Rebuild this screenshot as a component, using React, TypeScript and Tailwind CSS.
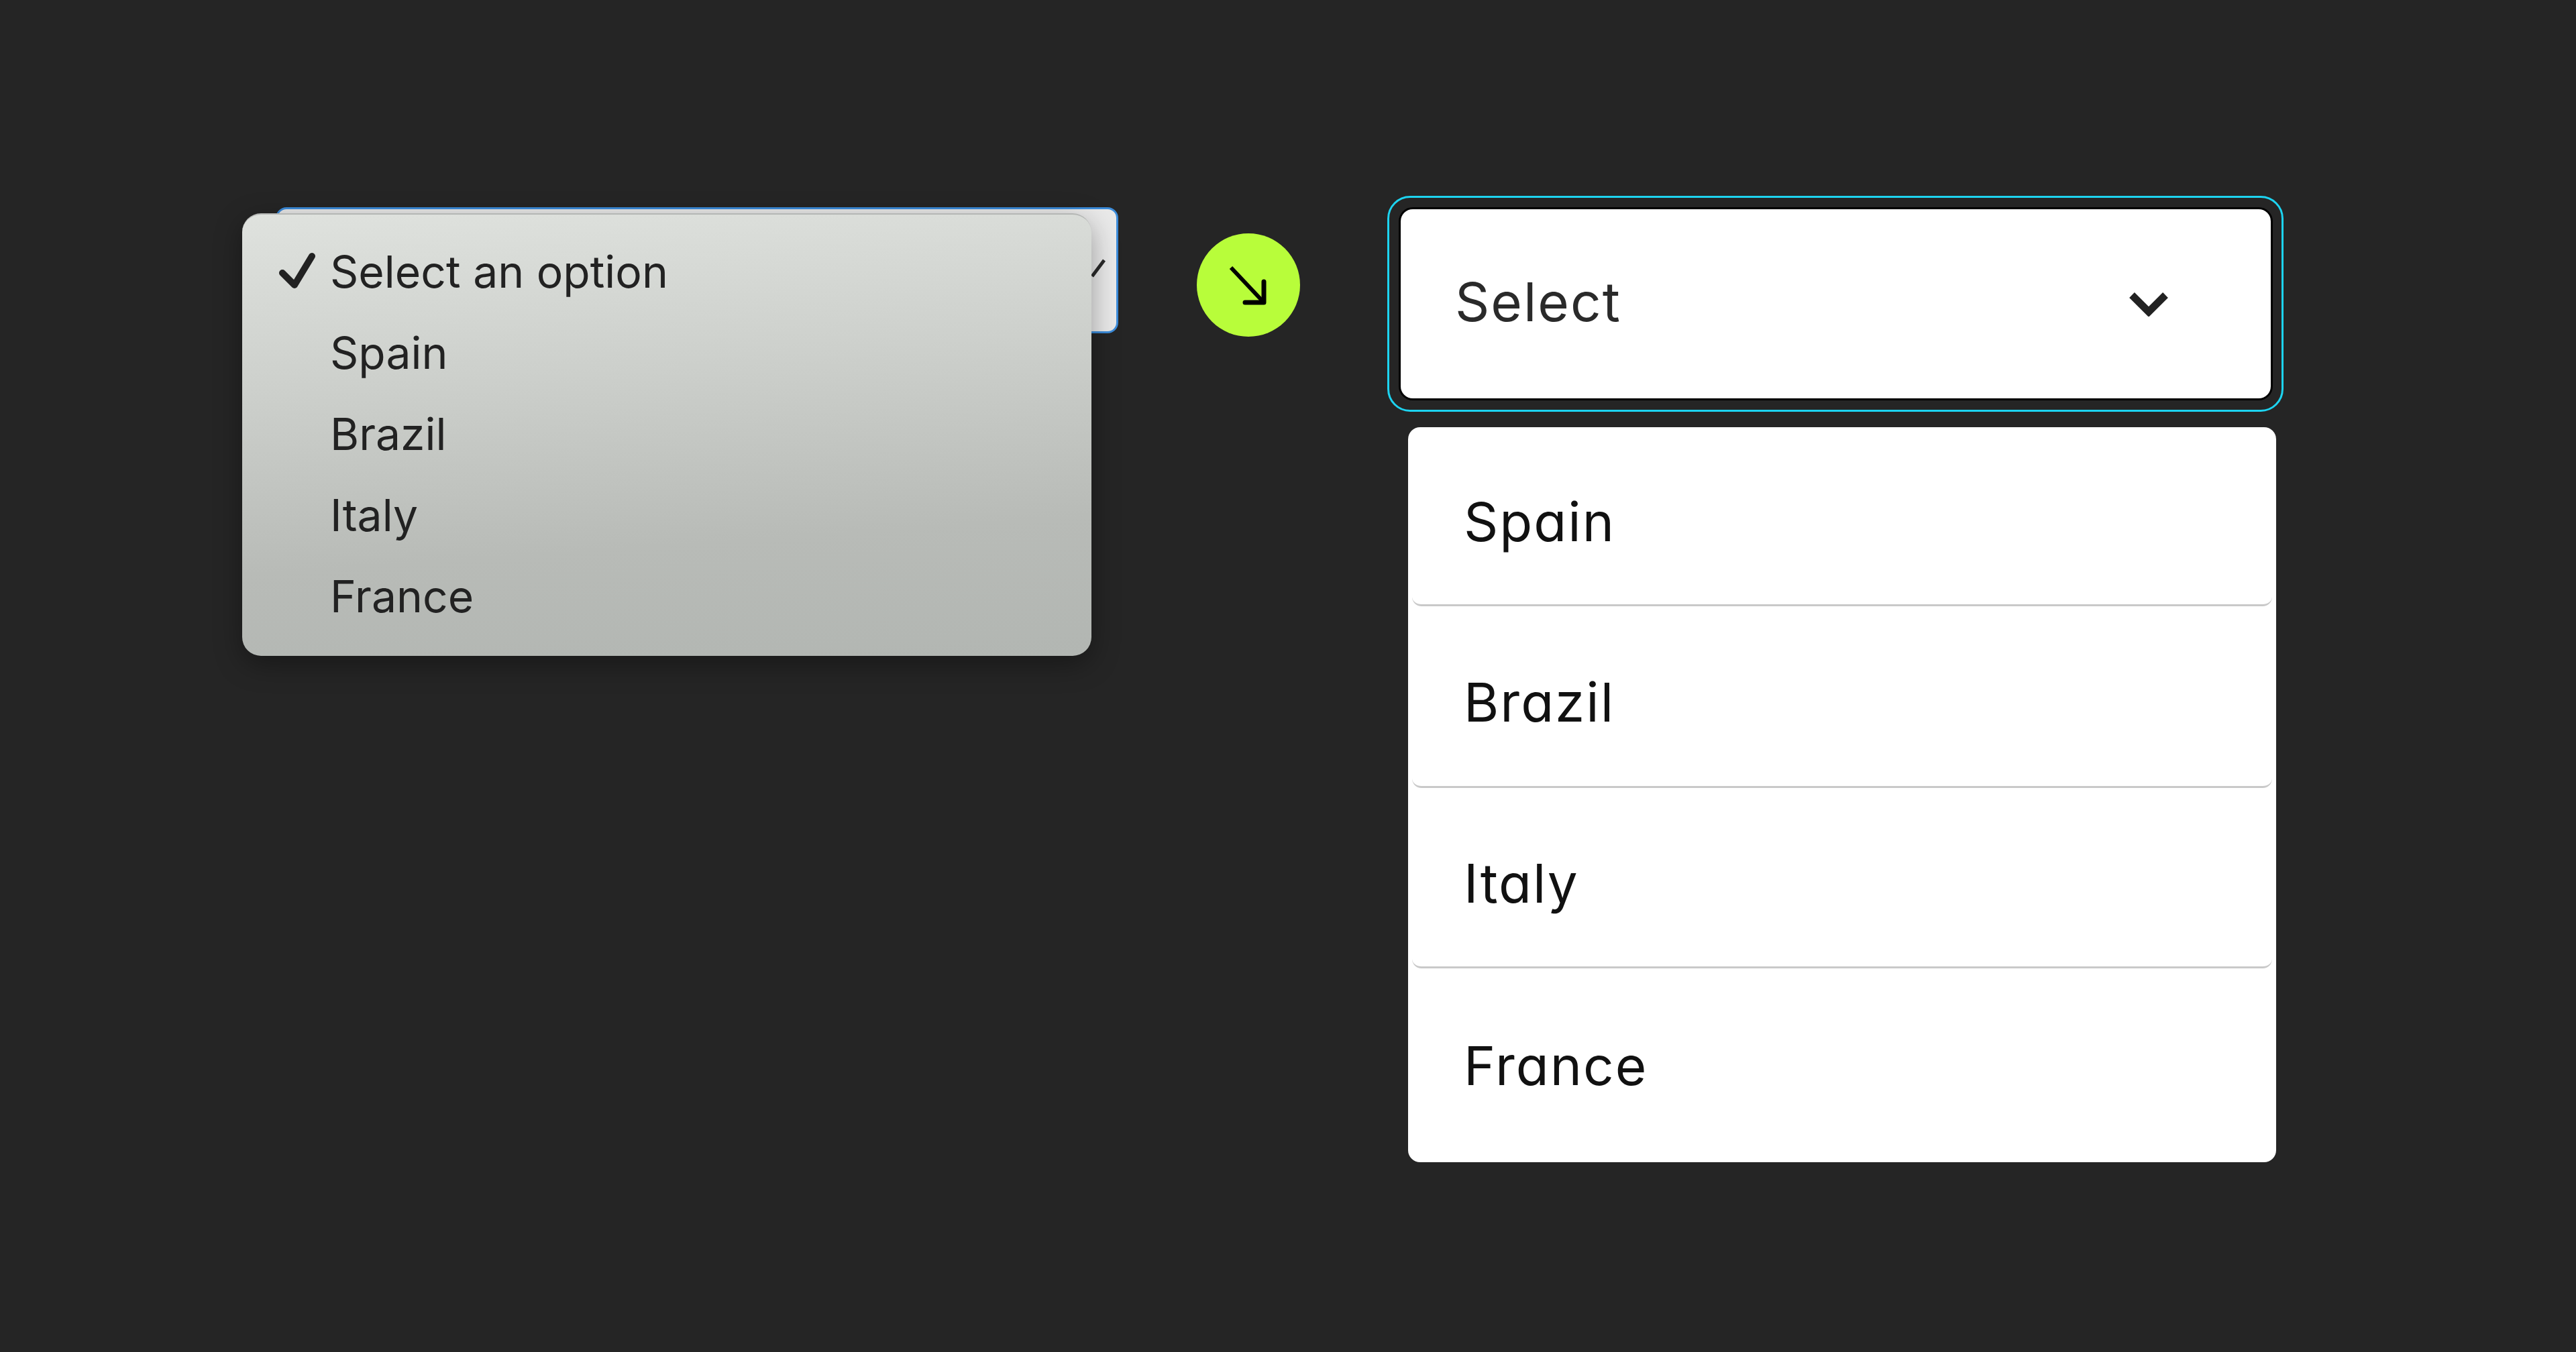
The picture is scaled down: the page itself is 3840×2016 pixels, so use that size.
import React from 'react';

const countries = ['Spain', 'Brazil', 'Italy', 'France'];

const dropdownRows = [
  { label: 'Spain', className: 'flex items-center h-[267px] mx-[6px] pl-[77px] pt-[18px] rounded-b-[14px] border-b-[3px] border-[#c9c9c9]' },
  { label: 'Brazil', className: 'flex items-center h-[271px] mx-[6px] pl-[77px] pt-[18px] rounded-b-[14px] border-b-[3px] border-[#c9c9c9]' },
  { label: 'Italy', className: 'flex items-center h-[269px] mx-[6px] pl-[77px] pt-[18px] rounded-b-[14px] border-b-[3px] border-[#c9c9c9]' },
  { label: 'France', className: 'flex items-center h-[289px] mx-[6px] pl-[77px]' },
];

const NativeSelect = () => (
  <div className="relative w-[1256px] h-[188px] shrink-0 rounded-[16px] border-[3px] border-[#3b8bd9] bg-[#e9e9e9]">
    <svg className="absolute left-[1208px] top-[70px]" width="30" height="36" viewBox="0 0 30 36">
      <path d="M6 30 L24 6" stroke="#2a2a2a" strokeWidth="5" fill="none" />
    </svg>
    <div className="absolute left-[-53px] top-[6px] w-[1266px] h-[660px] pt-[25px] rounded-[28px] border-t-[2px] border-[#b4b6b4] bg-[linear-gradient(176deg,#dfe2de_0%,#cdd0cc_35%,#b8bbb7_72%,#b2b6b2_100%)] shadow-[0_12px_40px_rgba(0,0,0,0.35)] font-['Inter',sans-serif] text-[66px] text-[#222222]">
      <div className="flex items-center h-[121px]">
        <svg className="ml-[54px] mr-[17px] shrink-0" width="60" height="60" viewBox="0 0 60 60">
          <path d="M6 31 L24 49 L50 6" stroke="#222222" strokeWidth="10" fill="none" strokeLinecap="round" strokeLinejoin="round" />
        </svg>
        <span>Select an option</span>
      </div>
      {countries.map((c) => (
        <div key={c} className="flex items-center h-[121px] pl-[131px]">{c}</div>
      ))}
    </div>
  </div>
);

const ArrowBadge = () => (
  <div className="mt-[39px] ml-[117px] w-[154px] h-[154px] shrink-0 rounded-full bg-[#b8fd3a] flex items-center justify-center">
    <svg width="154" height="154" viewBox="0 0 154 154">
      <path d="M51 51 L100 103" stroke="#000000" strokeWidth="6" fill="none" />
      <path d="M100 72 L100 103 L72 103" stroke="#000000" strokeWidth="7" fill="none" strokeLinecap="round" strokeLinejoin="round" />
    </svg>
  </div>
);

const CustomSelect = () => (
  <div className="ml-[130px] mt-[-17px] w-[1336px] shrink-0 font-['Inter',sans-serif] [font-feature-settings:'cv11']">
    <div className="h-[322px] pt-[17px] pl-[17px] pr-[16px] rounded-[34px] border-[3px] border-[#1dd3f0]">
      <div className="flex items-center justify-between h-[282px] pl-[81px] pr-[152px] pb-[6px] rounded-[18px] bg-white shadow-[0_0_0_3px_#000000] text-[80px] tracking-[2px] text-[#2a2a2a]">
        <span>Select</span>
        <svg className="mt-[6px]" width="60" height="38" viewBox="0 0 60 38">
          <path d="M5 6 L30 31 L55 6" stroke="#222222" strokeWidth="11" fill="none" />
        </svg>
      </div>
    </div>
    <div className="ml-[31px] mt-[23px] w-[1294px] rounded-[18px] bg-white text-[80px] tracking-[2px] text-[#111111]">
      {dropdownRows.map((row) => (
        <div key={row.label} className={row.className}>
          {row.label}
        </div>
      ))}
    </div>
  </div>
);

export default function App() {
  return (
    <div className="flex items-start w-full h-[2016px] pl-[411px] pt-[309px] bg-[#252525]">
      <NativeSelect />
      <ArrowBadge />
      <CustomSelect />
    </div>
  );
}
